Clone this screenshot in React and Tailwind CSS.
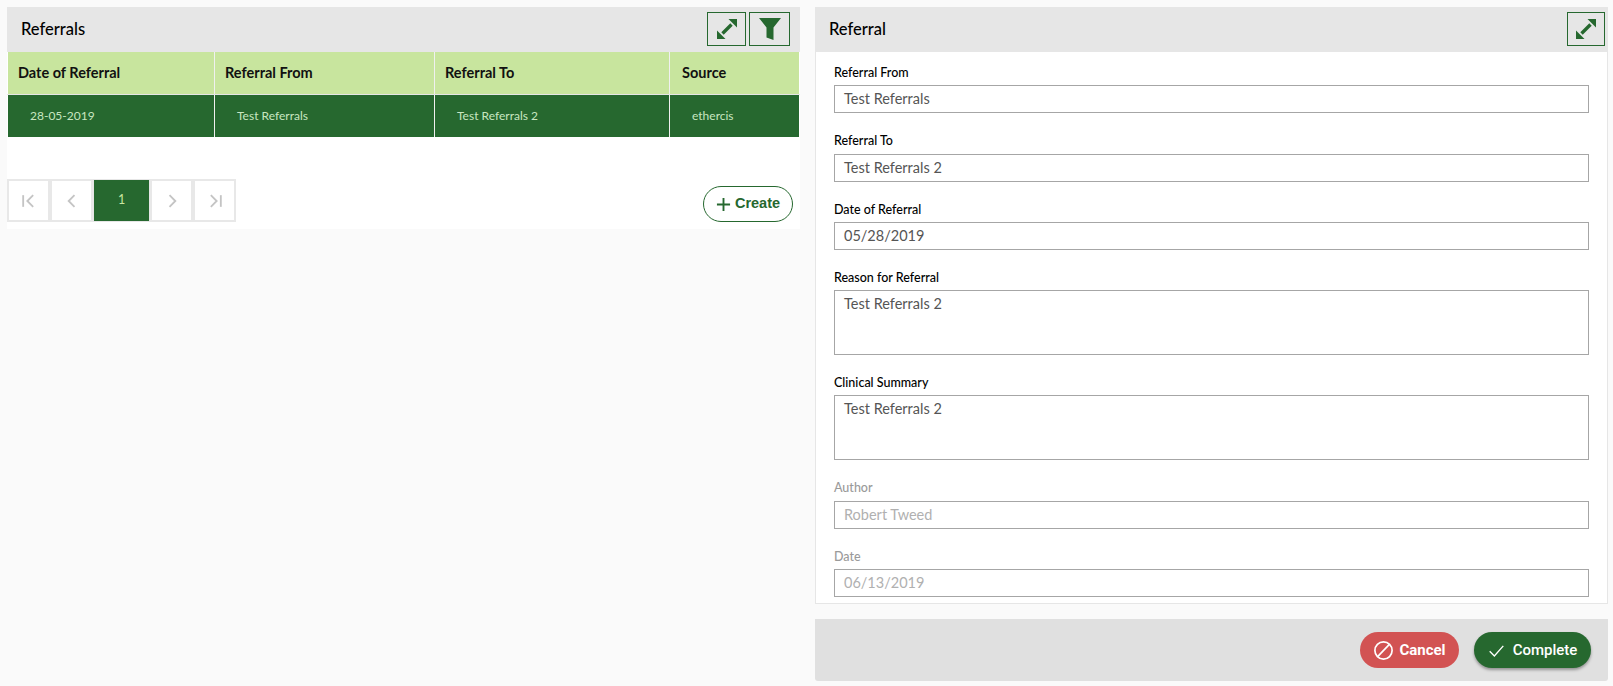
import React from "react";

const GREEN = "#26682f";

function ExpandIcon() {
  return (
    <svg viewBox="0 0 24 24" className="w-[24px] h-[24px]" fill="none">
      <path d="M13.5 2H22V10.5Z" fill={GREEN} />
      <path d="M10.5 22H2V13.5Z" fill={GREEN} />
      <path d="M7.5 16.5 16.5 7.5" stroke={GREEN} strokeWidth="3.4" />
    </svg>
  );
}

function IconBtn({ children, w }) {
  return (
    <button className={`${w} h-[34px] border border-[#26682f] flex items-center justify-center bg-transparent`}>
      {children}
    </button>
  );
}

function PageBtn({ children, active }) {
  return (
    <div
      className={
        active
          ? "w-[57px] h-[43px] bg-[#26682f] border border-[#e6e6e6] flex items-center justify-center text-[12.5px] text-[#c8e6a0]"
          : "w-[43px] h-[43px] border-2 border-[#e8e8e8] bg-white flex items-center justify-center"
      }
    >
      {children}
    </div>
  );
}

function Chevrons({ type }) {
  const paths = {
    first: <><path d="M5 5v14" /><path d="M17 5l-7 7 7 7" /></>,
    prev: <path d="M15 5l-7 7 7 7" />,
    next: <path d="M9 5l7 7-7 7" />,
    last: <><path d="M19 5v14" /><path d="M7 5l7 7-7 7" /></>,
  };
  return (
    <svg viewBox="0 0 24 24" className="w-[20px] h-[20px]" fill="none" stroke="#c4c4c4" strokeWidth="2.2">
      {paths[type]}
    </svg>
  );
}

function Field({ label, value, area, disabled }) {
  return (
    <div className="flex flex-col">
      <div className={`h-[24px] flex items-center text-[12.5px] font-medium ${disabled ? "text-[#9a9a9a]" : "text-black"}`}>
        {label}
      </div>
      <div
        className={`${area ? "h-[65px] pt-[2px] items-start" : "h-[28px] items-center"} flex border border-[#a6a6a6] bg-white px-[9px] text-[14.5px] ${disabled ? "text-[#b0b0b0]" : "text-[#555555]"}`}
      >
        {value}
      </div>
    </div>
  );
}

const cols = [
  { w: "w-[207px]", head: "Date of Referral", cell: "28-05-2019", hp: "pl-[10px]" },
  { w: "w-[220px]", head: "Referral From", cell: "Test Referrals", hp: "pl-[10px]" },
  { w: "w-[235px]", head: "Referral To", cell: "Test Referrals 2", hp: "pl-[10px]" },
  { w: "flex-1", head: "Source", cell: "ethercis", hp: "pl-[12px]" },
];

export default function App() {
  return (
    <div className="w-[1613px] h-[686px] bg-[#fafafa] flex gap-[15px] pl-[7px] pr-[5px] pt-[7px] font-['Lato',sans-serif] overflow-hidden">
      <div className="w-[793px] h-[222px] bg-white flex flex-col">
        <div className="h-[45px] bg-[#e6e6e6] flex items-center justify-between pl-[14px] pr-[10px] shrink-0">
          <span className="text-[16.5px] font-medium text-black">Referrals</span>
          <div className="flex gap-[3px] pb-[1px]">
            <IconBtn w="w-[39px]"><ExpandIcon /></IconBtn>
            <IconBtn w="w-[41px]">
              <svg viewBox="0 0 24 24" className="w-[24px] h-[24px]"><path d="M1 1H23L15.5 10.5V23L8.5 20.5V10.5Z" fill={GREEN} /></svg>
            </IconBtn>
          </div>
        </div>
        <div className="flex h-[42px] pl-[1px] pr-[1px]">
          {cols.map((c, i) => (
            <div key={c.head} className={`${c.w} bg-[#c8e59e] flex items-center ${c.hp} text-[14.5px] font-bold text-[#111111] ${i < 3 ? "border-r border-[#f0f0f0]" : ""}`}>
              {c.head}
            </div>
          ))}
        </div>
        <div className="flex h-[43px] pl-[1px] pr-[1px] border-t border-[#e6e6e6]">
          {cols.map((c, i) => (
            <div key={c.head} className={`${c.w} bg-[#26682f] flex items-center pl-[22px] text-[12px] text-[#c8e6c0] ${i < 3 ? "border-r border-[#f0f0f0]" : ""}`}>
              {c.cell}
            </div>
          ))}
        </div>
        <div className="flex items-end justify-between pt-[42px] pr-[7px]">
          <div className="flex">
            <PageBtn><Chevrons type="first" /></PageBtn>
            <PageBtn><Chevrons type="prev" /></PageBtn>
            <PageBtn active>1</PageBtn>
            <PageBtn><Chevrons type="next" /></PageBtn>
            <PageBtn><Chevrons type="last" /></PageBtn>
          </div>
          <button className="w-[90px] h-[36px] rounded-full border border-[#26682f] flex items-center justify-center gap-[4px] text-[14.5px] font-bold text-[#26682f] font-['Liberation_Sans',sans-serif]">
            <svg viewBox="0 0 16 16" className="w-[15px] h-[15px]" stroke={GREEN} strokeWidth="2" fill="none"><path d="M8 1v14M1 8h14" /></svg>
            Create
          </button>
        </div>
      </div>

      <div className="w-[793px] h-[674px] flex flex-col">
        <div className="h-[45px] bg-[#e6e6e6] flex items-center justify-between pl-[14px] pr-[3px] shrink-0">
          <span className="text-[16.5px] font-medium text-black">Referral</span>
          <div className="pb-[1px]">
            <IconBtn w="w-[38px]"><ExpandIcon /></IconBtn>
          </div>
        </div>
        <div className="h-[552px] bg-white border border-t-0 border-[#e6e6e6] px-[18px] pt-[9.3px] flex flex-col gap-[16.3px] shrink-0">
          <Field label="Referral From" value="Test Referrals" />
          <Field label="Referral To" value="Test Referrals 2" />
          <Field label="Date of Referral" value="05/28/2019" />
          <Field label="Reason for Referral" value="Test Referrals 2" area />
          <Field label="Clinical Summary" value="Test Referrals 2" area />
          <Field label="Author" value="Robert Tweed" disabled />
          <Field label="Date" value="06/13/2019" disabled />
        </div>
        <div className="mt-[15px] h-[62px] bg-[#e0e0e0] rounded-b-[3px] flex items-center justify-end gap-[15px] pr-[17px] shrink-0">
          <button className="w-[99px] h-[36px] rounded-full bg-[#d25353] flex items-center justify-center gap-[5px] text-white text-[15px] font-bold font-['Roboto',sans-serif]">
            <svg viewBox="0 0 20 20" className="w-[21px] h-[21px]" fill="none" stroke="white" strokeWidth="1.6"><circle cx="10" cy="10" r="8.2" /><path d="M4.4 15.8 15.6 4.2" /></svg>
            Cancel
          </button>
          <button className="w-[117px] h-[36px] rounded-full bg-[#26682f] shadow-[0_2px_3px_rgba(0,0,0,0.35)] flex items-center justify-center gap-[8px] text-white text-[15px] font-medium font-['Roboto',sans-serif]">
            <svg viewBox="0 0 20 20" className="w-[17px] h-[17px]" fill="none" stroke="white" strokeWidth="1.6"><path d="M2 11l5.5 5.5L18 4.5" /></svg>
            Complete
          </button>
        </div>
      </div>
    </div>
  );
}
